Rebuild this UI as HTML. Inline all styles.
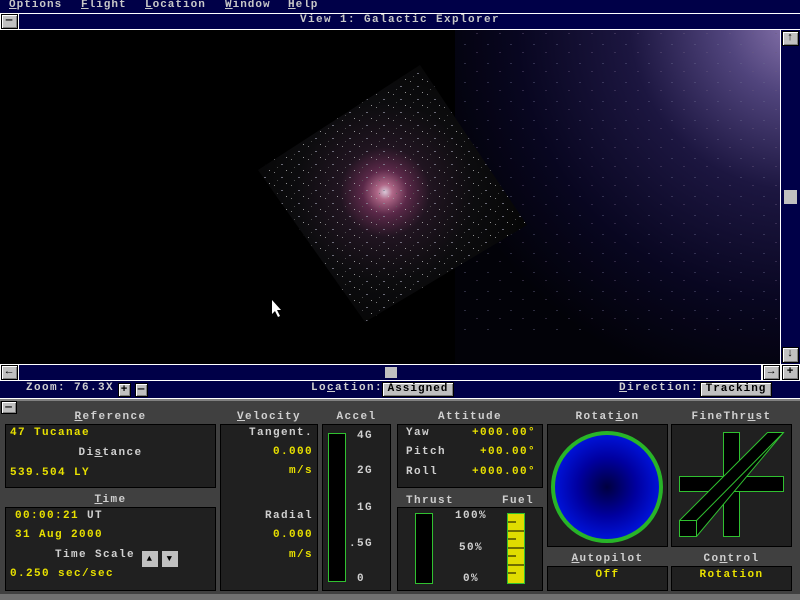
<!DOCTYPE html>
<html><head><meta charset="utf-8"><style>
*{margin:0;padding:0;box-sizing:border-box}
body{width:800px;height:600px;overflow:hidden;background:#404040;position:relative;font-family:"Liberation Mono","DejaVu Sans Mono",monospace;font-weight:bold;font-size:11px;letter-spacing:1.4px}
.a{position:absolute}
.nav{background:#000048}
.t{position:absolute;white-space:nowrap;color:#d0d0d0}
.y{color:#e8e000}
.box{position:absolute;background:#202020;border:1px solid #000}
.btn{position:absolute;background:#c0c0c0;border:1px solid #000;box-shadow:inset 1px 1px #fff,inset -1px -1px #808080;color:#000;text-align:center;font-size:11px;line-height:12px;letter-spacing:1px}
u{text-decoration:underline}
</style></head><body>
<!-- menu -->
<div class="a nav" style="left:0;top:0;width:800px;height:13px"></div>
<div class="t" style="left:9px;top:-1px;color:#c8c8c8;letter-spacing:1px"><u>O</u>ptions</div>
<div class="t" style="left:81px;top:-1px;color:#c8c8c8;letter-spacing:1px"><u>F</u>light</div>
<div class="t" style="left:145px;top:-1px;color:#c8c8c8;letter-spacing:1px"><u>L</u>ocation</div>
<div class="t" style="left:225px;top:-1px;color:#c8c8c8;letter-spacing:1px"><u>W</u>indow</div>
<div class="t" style="left:288px;top:-1px;color:#c8c8c8;letter-spacing:1px"><u>H</u>elp</div>
<!-- title -->
<div class="a" style="left:0;top:13px;width:800px;height:17px;background:#fff"></div>
<div class="a nav" style="left:19px;top:14px;width:781px;height:15px"></div>
<div class="btn" style="left:1px;top:14px;width:17px;height:15px">&#8212;</div>
<div class="t" style="left:0;width:800px;text-align:center;top:14px;color:#c8c8c8">View 1: Galactic Explorer</div>
<!-- viewport -->
<svg class="a" style="left:0;top:30px" width="781" height="335" viewBox="0 30 781 335">
<defs>
<radialGradient id="neb" cx="800" cy="20" r="380" gradientUnits="userSpaceOnUse">
<stop offset="0" stop-color="#8c78b0"/><stop offset="0.2" stop-color="#50447c"/><stop offset="0.45" stop-color="#1c1640"/><stop offset="0.75" stop-color="#080620"/><stop offset="1" stop-color="#020208"/></radialGradient>
<radialGradient id="gal" cx="385" cy="192" r="150" gradientUnits="userSpaceOnUse">
<stop offset="0" stop-color="#d8c8d8"/><stop offset="0.05" stop-color="#b06888"/><stop offset="0.15" stop-color="#5a2848"/><stop offset="0.3" stop-color="#201420"/><stop offset="0.6" stop-color="#0c0c0e"/><stop offset="1" stop-color="#050505"/></radialGradient>
<pattern id="st" width="17" height="13" patternUnits="userSpaceOnUse">
<rect x="2" y="3" width="1" height="1" fill="#a0a0a0"/><rect x="9" y="8" width="2" height="1" fill="#8a8a9a"/><rect x="14" y="1" width="1" height="1" fill="#c0c0c0"/><rect x="5" y="11" width="1" height="1" fill="#606060"/></pattern>
<pattern id="st2" width="23" height="19" patternUnits="userSpaceOnUse">
<rect x="4" y="6" width="2" height="1" fill="#6a6a90"/><rect x="16" y="14" width="2" height="1" fill="#6a5a80"/></pattern>
</defs>
<rect x="0" y="30" width="781" height="335" fill="#000"/>
<rect x="455" y="30" width="326" height="335" fill="url(#neb)"/>
<rect x="455" y="30" width="326" height="300" fill="url(#st2)" opacity="0.4"/>
<polygon points="420,65 527,225 365,322 258,170" fill="url(#gal)"/>
<polygon points="420,65 527,225 365,322 258,170" fill="url(#st)" opacity="0.75"/>
<path d="M272 300 v14 l3-3 3 6 2-1-3-6 4 0z" fill="#fff"/>
</svg>
<!-- vscroll -->
<div class="a" style="left:780px;top:30px;width:1px;height:335px;background:#fff"></div>
<div class="a nav" style="left:781px;top:30px;width:19px;height:335px"></div>
<div class="btn" style="left:782px;top:31px;width:17px;height:15px">&#8593;</div>
<div class="a" style="left:784px;top:190px;width:13px;height:14px;background:#c0c0c0"></div>
<div class="btn" style="left:782px;top:347px;width:17px;height:16px">&#8595;</div>
<!-- hscroll -->
<div class="a" style="left:0;top:364px;width:800px;height:17px;background:#fff"></div>
<div class="a nav" style="left:19px;top:365px;width:742px;height:15px"></div>
<div class="btn" style="left:1px;top:365px;width:17px;height:15px">&#8592;</div>
<div class="a" style="left:385px;top:367px;width:12px;height:11px;background:#c0c0c0"></div>
<div class="btn" style="left:763px;top:365px;width:17px;height:15px">&#8594;</div>
<div class="btn" style="left:782px;top:365px;width:17px;height:15px">+</div>
<!-- status -->
<div class="a nav" style="left:0;top:381px;width:800px;height:17px"></div>
<div class="a" style="left:0;top:398px;width:800px;height:1px;background:#fff"></div>
<div class="t" style="left:26px;top:382px">Zoom: 76.3X</div>
<div class="btn" style="left:118px;top:383px;width:13px;height:14px">+</div>
<div class="btn" style="left:135px;top:383px;width:13px;height:14px">&#8212;</div>
<div class="t" style="left:311px;top:382px">Lo<u>c</u>ation:</div>
<div class="btn" style="left:382px;top:382px;width:72px;height:15px">Assigned</div>
<div class="t" style="left:619px;top:382px"><u>D</u>irection:</div>
<div class="btn" style="left:700px;top:382px;width:72px;height:15px">Tracking</div>
<!-- panel -->
<div class="a" style="left:0;top:399px;width:800px;height:2px;background:#808080"></div>
<div class="btn" style="left:1px;top:401px;width:16px;height:13px">&#8212;</div>
<div class="a" style="left:0;top:594px;width:800px;height:6px;background:#707070"></div>

<div class="t" style="left:5px;width:211px;text-align:center;top:411px"><u>R</u>eference</div>
<div class="box" style="left:5px;top:424px;width:211px;height:64px"></div>
<div class="t y" style="left:10px;top:427px">47 Tucanae</div>
<div class="t" style="left:5px;width:211px;text-align:center;top:447px">Di<u>s</u>tance</div>
<div class="t y" style="left:10px;top:467px">539.504 LY</div>

<div class="t" style="left:5px;width:211px;text-align:center;top:494px"><u>T</u>ime</div>
<div class="box" style="left:5px;top:507px;width:211px;height:84px"></div>
<div class="t y" style="left:15px;top:510px">00:00:21 <span style="color:#d0d0d0">UT</span></div>
<div class="t y" style="left:15px;top:529px">31 Aug 2000</div>
<div class="t" style="left:55px;top:549px">Time Scale</div>
<div class="a" style="left:142px;top:551px;width:16px;height:16px;background:#c0c0c0;color:#000;font-size:9px;text-align:center;line-height:16px">&#9650;</div>
<div class="a" style="left:162px;top:551px;width:16px;height:16px;background:#c0c0c0;color:#000;font-size:9px;text-align:center;line-height:16px">&#9660;</div>
<div class="t y" style="left:10px;top:568px">0.250 sec/sec</div>

<div class="t" style="left:220px;width:98px;text-align:center;top:411px"><u>V</u>elocity</div>
<div class="box" style="left:220px;top:424px;width:98px;height:167px"></div>
<div class="t" style="right:487px;top:427px">Tangent.</div>
<div class="t y" style="right:487px;top:446px">0.000</div>
<div class="t y" style="right:487px;top:465px">m/s</div>
<div class="t" style="right:487px;top:510px">Radial</div>
<div class="t y" style="right:487px;top:529px">0.000</div>
<div class="t y" style="right:487px;top:549px">m/s</div>

<div class="t" style="left:322px;width:69px;text-align:center;top:411px">Accel</div>
<div class="box" style="left:322px;top:424px;width:69px;height:167px"></div>
<div class="a" style="left:328px;top:433px;width:18px;height:149px;background:#000;border:1px solid #30c030"></div>
<div class="t" style="left:357px;top:430px">4G</div>
<div class="t" style="left:357px;top:465px">2G</div>
<div class="t" style="left:357px;top:502px">1G</div>
<div class="t" style="left:349px;top:538px">.5G</div>
<div class="t" style="left:357px;top:573px">0</div>

<div class="t" style="left:397px;width:146px;text-align:center;top:411px">Attitude</div>
<div class="box" style="left:397px;top:424px;width:146px;height:64px"></div>
<div class="t" style="left:406px;top:427px">Yaw</div>
<div class="t" style="left:406px;top:446px">Pitch</div>
<div class="t" style="left:406px;top:466px">Roll</div>
<div class="t y" style="right:264px;top:427px">+000.00&#176;</div>
<div class="t y" style="right:264px;top:446px">+00.00&#176;</div>
<div class="t y" style="right:264px;top:466px">+000.00&#176;</div>

<div class="t" style="left:406px;top:495px">Thrust</div>
<div class="t" style="left:502px;top:495px">Fuel</div>
<div class="box" style="left:397px;top:507px;width:146px;height:84px"></div>
<div class="a" style="left:415px;top:513px;width:18px;height:71px;background:#000;border:1px solid #30c030"></div>
<div class="t" style="left:455px;top:510px">100%</div>
<div class="t" style="left:459px;top:542px">50%</div>
<div class="t" style="left:463px;top:573px">0%</div>
<svg class="a" style="left:507px;top:513px" width="18" height="71"><rect x="0.5" y="0.5" width="17" height="70" fill="#e0dc00" stroke="#30c030"/>
<path d="M1 9h8M1 18h16M1 26h8M1 35h16M1 43h8M1 52h16M1 60h8" stroke="#000" stroke-width="1"/></svg>

<div class="t" style="left:547px;width:121px;text-align:center;top:411px">Rota<span>t</span><u>i</u>on</div>
<div class="box" style="left:547px;top:424px;width:121px;height:123px"></div>
<div class="a" style="left:551px;top:431px;width:112px;height:112px;border-radius:50%;border:4px solid #28b428;background:radial-gradient(circle at 50% 50%,#000040 0%,#0000a0 40%,#0018e8 80%,#0830ff 100%)"></div>

<div class="t" style="left:671px;width:121px;text-align:center;top:411px">FineThr<u>u</u>st</div>
<div class="box" style="left:671px;top:424px;width:121px;height:123px"></div>
<svg class="a" style="left:671px;top:424px" width="121" height="123">
<g fill="#000" stroke="#30c030" stroke-width="1">
<rect x="52.5" y="8.5" width="16" height="104"/>
<rect x="8.5" y="52.5" width="104" height="15"/>
<polygon points="96.5,8.5 112.5,8.5 25.5,112.5 8.5,112.5 8.5,96.5"/>
<rect x="8.5" y="96.5" width="17" height="16"/>
<path d="M25.5 96.5 L112.5 8.5" fill="none"/>
</g></svg>

<div class="t" style="left:547px;width:121px;text-align:center;top:553px"><u>A</u>utopilot</div>
<div class="box" style="left:547px;top:566px;width:121px;height:25px"></div>
<div class="t y" style="left:547px;width:121px;text-align:center;top:569px">Off</div>
<div class="t" style="left:671px;width:121px;text-align:center;top:553px">Co<u>n</u>trol</div>
<div class="box" style="left:671px;top:566px;width:121px;height:25px"></div>
<div class="t y" style="left:671px;width:121px;text-align:center;top:569px">Rotation</div>
</body></html>
